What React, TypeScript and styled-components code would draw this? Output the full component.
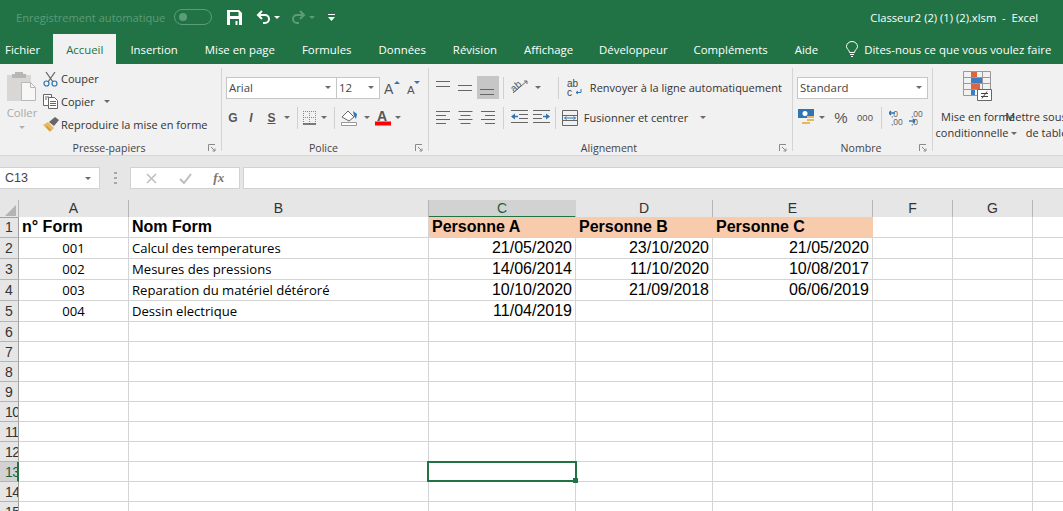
import React from "react";
import styled, { createGlobalStyle } from "styled-components";

const GREEN = "#217346";
const UI = `"Open Sans", "Noto Sans", sans-serif`;
const ARIAL = `"Liberation Sans", Arial, sans-serif`;

const Global = createGlobalStyle`
  html, body { margin: 0; padding: 0; background: #e6e6e6; }
  * { box-sizing: border-box; }
`;

const Page = styled.div`
  width: 1063px; height: 511px; overflow: hidden; background: #e6e6e6;
  font-family: ${UI}; display: flex; flex-direction: column;
`;

/* ---------- title bar ---------- */
const TitleBar = styled.div`
  height: 34px; background: ${GREEN}; display: flex; align-items: center; flex: none;
  padding-left: 16px; color: #fff; font-size: 11.2px;
`;
const AutoSave = styled.span`color: #5c9c78; font-size: 11.1px; width: 158px; white-space: nowrap;`;
const Toggle = styled.span`
  width: 38px; height: 16px; border: 1px solid #5c9c78; border-radius: 8px; display: flex; align-items: center;
  padding-left: 4px; margin-right: 15px;
  &::before { content: ""; width: 8px; height: 8px; border-radius: 50%; background: #5c9c78; }
`;
const QuickIcon = styled.span<{ $w: number }>`width: ${p => p.$w}px; height: 20px; display: flex; align-items: center; flex: none;`;
const Title = styled.span`margin-left: auto; margin-right: 25px; font-size: 11.2px; white-space: pre;`;

/* ---------- tabs ---------- */
const TabBar = styled.div`height: 30px; background: ${GREEN}; display: flex; flex: none; padding-left: 5px;`;
const Tab = styled.div<{ $active?: boolean; $gap: number }>`
  height: 30px; display: flex; align-items: center; white-space: nowrap; font-size: 11.4px;
  color: ${p => (p.$active ? GREEN : "#fff")};
  background: ${p => (p.$active ? "#f1f1f1" : "transparent")};
  padding: ${p => (p.$active ? "0 13px" : "0")};
  margin-right: ${p => p.$gap}px;
`;
const Tell = styled(Tab)`gap: 5px;`;

/* ---------- ribbon ---------- */
const Ribbon = styled.div`
  height: 92px; background: #f1f1f1; border-bottom: 1px solid #d6d6d6; display: flex; flex: none; overflow: hidden;
  font-size: 11px; color: #333; width: 1063px;
`;
const Group = styled.div<{ $w: number }>`
  width: ${p => p.$w}px; flex: none; position: relative; display: flex; flex-direction: column;
  &::after { content: ""; position: absolute; right: 0; top: 4px; bottom: 4px; width: 1px; background: #d4d4d4; }
`;
const GroupBody = styled.div`height: 76px; display: flex; flex: none;`;
const GroupLabel = styled.div`text-align: center; font-size: 10.6px; line-height: 16px; color: #444; height: 16px; padding-right: 4px;`;
const Launcher = styled.span`position: absolute; right: 6px; bottom: 3px; width: 8px; height: 8px; display: flex;`;

const Paste = styled.div`
  width: 36px; margin-left: 4px; display: flex; flex-direction: column; align-items: center; padding-top: 7px; color: #a9a9a9;
  font-size: 11.3px; line-height: 16px; flex: none;
`;
const Clip = styled.div`display: flex; flex-direction: column; margin-left: 2px; padding-top: 3px; font-size: 11px;`;
const ClipRow = styled.div`height: 23px; display: flex; align-items: center; gap: 2px; white-space: nowrap;`;
const ClipIcon = styled.span`width: 17px; height: 18px; display: flex; align-items: center; justify-content: center;`;
const Stack = styled.div`display: flex; flex-direction: column; padding-top: 12px; padding-left: 4px; gap: 7px;`;
const Line = styled.div<{ $gap?: number }>`display: flex; align-items: center; gap: ${p => p.$gap ?? 0}px; height: 23px;`;
const Combo = styled.div<{ $w: number }>`
  width: ${p => p.$w}px; height: 22px; background: #fff; border: 1px solid #c6c6c6; display: flex; align-items: center;
  padding: 0 2px; justify-content: space-between; font-size: 11.4px; color: #444; flex: none; font-family: ${UI};
`;
const Caret = styled.span<{ $dim?: boolean }>`
  width: 0; height: 0; border-left: 3px solid transparent; border-right: 3px solid transparent;
  border-top: 3px solid ${p => (p.$dim ? "#b0b0b0" : "#6a6a6a")}; display: inline-block; margin: 0 3px; flex: none;
`;
const Btn = styled.span<{ $w: number; $on?: boolean }>`
  width: ${p => p.$w}px; height: 23px; display: flex; align-items: center; justify-content: center; flex: none;
  background: ${p => (p.$on ? "#c6c6c6" : "transparent")};
`;
const Bold = styled.span<{ $f?: string; $i?: boolean; $u?: boolean; $s?: number }>`
  font-family: ${ARIAL}; font-size: ${p => p.$s ?? 12}px; font-weight: 700; color: #555;
  font-style: ${p => (p.$i ? "italic" : "normal")};
  text-decoration: ${p => (p.$u ? "underline" : "none")};
`;
const Sep = styled.span`width: 1px; height: 22px; background: #d0d0d0; margin: 0 4px; flex: none;`;
const WideBtn = styled.div`display: flex; align-items: center; gap: 3px; white-space: nowrap; height: 23px;`;
const StyleBtn = styled.div<{ $w: number }>`
  width: ${p => p.$w}px; flex: none; display: flex; flex-direction: column; align-items: center; padding-top: 7px;
  font-size: 11px; line-height: 16px; white-space: nowrap; text-align: center; color: #333;
`;
const IconSlot = styled.div`height: 35px; display: flex; align-items: flex-start; justify-content: center; margin-bottom: 3px;`;

/* ---------- formula bar ---------- */
const FormulaBar = styled.div`height: 44px; flex: none; display: flex; padding-top: 11px; background: #e6e6e6;`;
const NameBox = styled.div`
  width: 100px; height: 22px; background: #fff; border: 1px solid #d2d2d2; border-left: none;
  font-family: ${ARIAL}; font-size: 12.5px; color: #444; display: flex; align-items: center; justify-content: space-between; padding: 0 5px;
`;
const Grip = styled.span`width: 30px; height: 22px; display: flex; align-items: center; justify-content: center;`;
const FxBox = styled.div`
  width: 110px; height: 22px; background: #fff; border: 1px solid #d2d2d2; display: flex; align-items: center; justify-content: space-around; padding: 0 4px;
  margin-right: 3px; flex: none;
`;
const FxText = styled.span`font-family: "Liberation Serif", serif; font-style: italic; font-size: 13px; font-weight: 700; color: #777;`;
const Formula = styled.div`flex: 1; height: 22px; background: #fff; border: 1px solid #d2d2d2; border-right: none;`;

/* ---------- sheet ---------- */
const COLS = "19px 110px 300px 147px 137px 160px 80px 80px 31px";
const Sheet = styled.div`flex: 1; background: #fff; min-height: 0;`;
const SRow = styled.div<{ $h: number }>`display: grid; grid-template-columns: ${COLS}; height: ${p => p.$h}px;`;
const Corner = styled.div`
  background: #e6e6e6; border-right: 1px solid #b5b5b5; border-bottom: 1px solid #9f9f9f; position: relative;
  &::after { content: ""; position: absolute; right: 2px; bottom: 1px; width: 0; height: 0;
    border-left: 11px solid transparent; border-bottom: 11px solid #b4b4b4; }
`;
const ColHead = styled.div<{ $sel?: boolean }>`
  background: ${p => (p.$sel ? "#d2d2d2" : "#e6e6e6")};
  border-right: 1px solid ${p => (p.$sel ? "#d2d2d2" : "#b5b5b5")};
  border-bottom: ${p => (p.$sel ? `2px solid ${GREEN}` : "1px solid #9f9f9f")};
  color: ${p => (p.$sel ? "#17613b" : "#333")};
  font-family: ${ARIAL}; font-size: 14px; line-height: 16px; text-align: center;
`;
const RowHead = styled.div<{ $sel?: boolean }>`
  background: ${p => (p.$sel ? "#d2d2d2" : "#e6e6e6")};
  border-right: ${p => (p.$sel ? `2px solid ${GREEN}` : "1px solid #9f9f9f")};
  border-bottom: 1px solid #b5b5b5;
  color: ${p => (p.$sel ? "#17613b" : "#333")};
  font-family: ${ARIAL}; font-size: 14px; display: flex; align-items: center; padding-left: ${p => 5}px; overflow: hidden;
  letter-spacing: -0.6px;
`;
const Cell = styled.div<{ $kind?: string; $fill?: boolean }>`
  position: relative; border-right: 1px solid #d4d4d4; border-bottom: 1px solid #d4d4d4; white-space: nowrap;
  display: flex; align-items: center; padding: 0 3px 0 3px;
  background: ${p => (p.$fill ? "#f8cbad" : "#fff")};
  ${p => p.$fill && "border-right-color: #f8cbad;"}
  color: #000;
  font-family: ${p => (p.$kind === "text" || p.$kind === "code" ? UI : ARIAL)};
  font-size: ${p => (p.$kind === "text" || p.$kind === "code" ? "13.1px" : "16px")};
  font-weight: ${p => (p.$kind === "head" ? 700 : 400)};
  justify-content: ${p => (p.$kind === "date" ? "flex-end" : p.$kind === "code" ? "center" : "flex-start")};
  overflow: visible;
`;
const Selection = styled.div`
  position: absolute; left: -2px; top: -1px; right: -2px; bottom: -1px; border: 2px solid ${GREEN}; z-index: 2;
  &::after { content: ""; position: absolute; right: -3px; bottom: -3px; width: 5px; height: 5px; background: ${GREEN}; border: 0; }
`;

/* ---------- icons ---------- */
const Launch = () => (
  <Launcher>
    <svg width="8" height="8" viewBox="0 0 8 8" fill="none" stroke="#8a8a8a"><path d="M.5 7V.5H7" /><path d="M3 3l4 4M7 4.5V7H4.5" /></svg>
  </Launcher>
);
const SaveIcon = () => (
  <svg width="15" height="15" viewBox="0 0 15 15"><path fill="#fff" d="M0 0h12l3 3v12H0z" /><path fill={GREEN} d="M3 2h8.5v4H3zM3 9h9v6H3z" /><path fill="#fff" d="M8.5 11h2v4h-2z" /></svg>
);
const UndoIcon = ({ c }: { c: string }) => (
  <svg width="15" height="14" viewBox="0 0 15 14" fill="none" stroke={c} strokeWidth="2"><path d="M6 1L2 5l4 4" /><path d="M2 5h7a4 4 0 0 1 0 8H7" /></svg>
);
const RedoIcon = ({ c }: { c: string }) => (
  <svg width="15" height="14" viewBox="0 0 15 14" fill="none" stroke={c} strokeWidth="2"><path d="M9 1l4 4-4 4" /><path d="M13 5H6a4 4 0 0 0 0 8h2" /></svg>
);
const Bulb = () => (
  <svg width="14" height="16" viewBox="0 0 14 16" fill="none" stroke="#fff"><path d="M4.5 11.5C4.5 9 1.5 8 1.5 5.5a5.5 5 0 0 1 11 0C12.5 8 9.5 9 9.5 11.5z" /><path d="M5 13.5h4M6 15.5h2" /></svg>
);
const PasteIcon = () => (
  <svg width="30" height="31" viewBox="0 0 30 31"><path fill="#d9d6d6" d="M0 4h24v26H0z" /><path fill="#b9b6b6" d="M8 1h8v2h3v4H5V3h3z" /><path fill="#f7f7f7" stroke="#b8b8b8" d="M14.500 11.500h9l5 5v13h-14z" /><path fill="none" stroke="#b8b8b8" d="M23.500 11.500v5h5" /></svg>
);
const Scissors = () => (
  <svg width="15" height="16" viewBox="0 0 15 16" fill="none"><path stroke="#666" strokeWidth="1.3" d="M3 1l7 10M12 1L5 11" /><circle cx="3.500" cy="12.500" r="2.500" stroke="#2f75b5" strokeWidth="1.200" /><circle cx="11.500" cy="12.500" r="2.500" stroke="#2f75b5" strokeWidth="1.200" /></svg>
);
const CopyIcon = () => (
  <svg width="16" height="15" viewBox="0 0 16 15" fill="none"><path stroke="#666" fill="#fff" d="M.5.500h8v11h-8z" /><path stroke="#666" fill="#fff" d="M5.500 3.500h6l3 3v8h-9z" /><path stroke="#2f75b5" d="M7 7.500h6M7 9.500h6M7 11.500h6" /><path stroke="#666" d="M2 3h4M2 5h2" /></svg>
);
const Brush = () => (
  <svg width="16" height="15" viewBox="0 0 16 15"><path fill="#e8b75f" d="M0 8l5-3 6 6-4 4z" /><path fill="#c9964a" d="M3 10l1-1 4 4-1 1z" /><path fill="#666" d="M6 5l6-5 4 3-5 6z" /></svg>
);
const LinesIcon = ({ top, widths, align, h = 5 }: { top: number; widths: number[]; align?: string; h?: number }) => (
  <svg width="16" height="16" viewBox="0 0 16 16" stroke="#666" fill="none">
    {widths.map((w, i) => {
      const y = top + i * h + 0.5;
      const x = align === "center" ? (15 - w) / 2 : align === "right" ? 15 - w : 0;
      return <path key={i} d={`M${x} ${y}h${w}`} />;
    })}
  </svg>
);
const Grow = () => (
  <svg width="17" height="15" viewBox="0 0 17 15"><text x="0" y="14" fontFamily="Liberation Sans" fontSize="14" fill="#555">A</text><path fill="#2f75b5" d="M10 4l3-3 3 3z" /></svg>
);
const Shrink = () => (
  <svg width="15" height="15" viewBox="0 0 15 15"><text x="1" y="14" fontFamily="Liberation Sans" fontSize="11.500" fill="#555">A</text><path fill="#2f75b5" d="M8 1h6l-3 3z" /></svg>
);
const BorderIcon = () => (
  <svg width="14" height="14" viewBox="0 0 14 14" fill="none"><path stroke="#888" strokeDasharray="1 1" d="M.5 0v13M6.500 0v13M12.500 0v13M0 .5h13M0 6.500h13" /><path stroke="#555" strokeWidth="1.500" d="M0 13h13" /></svg>
);
const FillIcon = () => (
  <svg width="18" height="18" viewBox="0 0 18 18" fill="none"><path stroke="#666" fill="#fff" d="M1 8l6-6 6 6-5 4z" /><path fill="#2f75b5" d="M12 2l4 3-1 5-2-3z" /><path stroke="#999" d="M.5 13.500h15v3H.5z" fill="#fff" /></svg>
);
const FontColor = () => (
  <svg width="16" height="17" viewBox="0 0 16 17"><text x="2" y="12" fontFamily="Liberation Sans" fontWeight="700" fontSize="14" fill="#555">A</text><path fill="#f00" d="M0 12.500h16v4H0z" /></svg>
);
const OrientIcon = () => (
  <svg width="20" height="17" viewBox="0 0 20 17" fill="none"><text x="1" y="10" transform="rotate(-40 7 8)" fontFamily="Liberation Sans" fontSize="10" fill="#555">ab</text><path stroke="#666" d="M3 14L17 2M17 2h-3M17 2v3" /></svg>
);
const IndentIcon = ({ flip }: { flip?: boolean }) => (
  <svg width="17" height="15" viewBox="0 0 17 15" fill="none" style={{ transform: flip ? "scaleX(-1)" : "none" }}>
    <path stroke="#666" d="M0 .5h17M8 4.500h9M8 8.500h9M0 12.500h17" />
    <path stroke="#2f75b5" strokeWidth="1.500" d="M1 6.500h6" /><path fill="#2f75b5" d="M0 6.500l4-3v6z" />
  </svg>
);
const WrapIcon = () => (
  <svg width="17" height="18" viewBox="0 0 17 18"><text x="0" y="8" fontFamily="Liberation Sans" fontSize="10" fill="#444">ab</text><text x="0" y="17" fontFamily="Liberation Sans" fontSize="10" fill="#444">c</text><path fill="none" stroke="#2f75b5" d="M14 10v3.500H9M9 13.500l2-1.500M9 13.500l2 1.500" /></svg>
);
const MergeIcon = () => (
  <svg width="16" height="16" viewBox="0 0 16 16" fill="none"><path stroke="#666" d="M.5.500h15v15H.5zM.5 5.500h15M.5 10.500h15" /><path stroke="#2f75b5" d="M2.500 8h11M2.500 8l2-1.500M2.500 8l2 1.500M13.500 8l-2-1.500M13.500 8l-2 1.500" /></svg>
);
const MoneyIcon = () => (
  <svg width="17" height="17" viewBox="0 0 17 17"><path fill="#2f75b5" d="M0 0h16v9H0z" /><circle cx="7" cy="4.500" r="2.500" fill="#fff" /><path fill="#e8b75f" d="M9 7h7v2H9zM9 10h7v2H9zM4 13h8v2H4z" /></svg>
);
const Dec = ({ flip }: { flip?: boolean }) => (
  <svg width="17" height="17" viewBox="0 0 17 17" fill="none"><text x="2" y="8" fontFamily="Liberation Sans" fontSize="8.500" fill="#666">{flip ? ",00" : ",0"}</text><text x="2" y="16" fontFamily="Liberation Sans" fontSize="8.500" fill="#666">{flip ? ",0" : ",00"}</text><path stroke="#2f75b5" strokeWidth="1.500" d={flip ? "M0 12h6M6 12l-2-2M6 12l-2 2" : "M0 4h6M0 4l2-2M0 4l2 2"} /></svg>
);
const CondIcon = () => (
  <svg width="30" height="30" viewBox="0 0 30 30" fill="none">
    <path stroke="#999" d="M.5.500h27v24H.5zM.5 6.500h27M.5 12.500h27M.5 18.500h27M8.500 0v25M19.500 0v25" />
    <path fill="#d9663d" d="M8 1h6v5H8zM8 13h9v5H8z" /><path fill="#3f7cc0" d="M8 7h11v5H8zM8 19h4v5H8z" />
    <path fill="#fff" stroke="#666" d="M14.500 18.500h14v11h-14z" />
    <path stroke="#444" d="M18 22.500h7M18 25.500h7M24 20.500l-5 7" />
  </svg>
);
const XIcon = () => (
  <svg width="11" height="11" viewBox="0 0 11 11" fill="none" stroke="#bdbdbd" strokeWidth="1.500"><path d="M1 1l9 9M10 1l-9 9" /></svg>
);
const CheckIcon = () => (
  <svg width="13" height="11" viewBox="0 0 13 11" fill="none" stroke="#bdbdbd" strokeWidth="2"><path d="M1 6l4 4 7-9" /></svg>
);
const Dots = () => (
  <svg width="3" height="12" viewBox="0 0 3 12" fill="#a8a8a8"><path d="M0 0h3v2H0zM0 5h3v2H0zM0 10h3v2H0z" /></svg>
);

/* ---------- data ---------- */
const COL_NAMES = ["A", "B", "C", "D", "E", "F", "G", ""];
const DATA: { code?: string; name?: string; c?: string; d?: string; e?: string }[] = [
  { code: "001", name: "Calcul des temperatures", c: "21/05/2020", d: "23/10/2020", e: "21/05/2020" },
  { code: "002", name: "Mesures des pressions", c: "14/06/2014", d: "11/10/2020", e: "10/08/2017" },
  { code: "003", name: "Reparation du matériel détéroré", c: "10/10/2020", d: "21/09/2018", e: "06/06/2019" },
  { code: "004", name: "Dessin electrique", c: "11/04/2019" },
];
const TABS: [string, number][] = [
  ["Fichier", 13], ["Accueil", 14], ["Insertion", 27], ["Mise en page", 27], ["Formules", 27], ["Données", 27],
  ["Révision", 27], ["Affichage", 26], ["Développeur", 26], ["Compléments", 27], ["Aide", 27],
];

export default function App() {
  return (
    <Page>
      <Global />
      <TitleBar>
        <AutoSave>Enregistrement automatique</AutoSave>
        <Toggle />
        <QuickIcon $w={29}><SaveIcon /></QuickIcon>
        <QuickIcon $w={35}><UndoIcon c="#fff" /><Caret style={{ borderTopColor: "#fff" }} /></QuickIcon>
        <QuickIcon $w={37}><RedoIcon c="#5c9c78" /><Caret style={{ borderTopColor: "#5c9c78" }} /></QuickIcon>
        <QuickIcon $w={10}>
          <svg width="7" height="7" viewBox="0 0 7 7" fill="#fff"><path d="M0 0h7v1H0zM0 3h7L3.500 7z" /></svg>
        </QuickIcon>
        <Title>Classeur2 (2) (1) (2).xlsm  -  Excel</Title>
      </TitleBar>
      <TabBar>
        {TABS.map(([t, g], i) => <Tab key={t} $gap={g} $active={i === 1}>{t}</Tab>)}
        <Tell $gap={0}><Bulb />Dites-nous ce que vous voulez faire</Tell>
      </TabBar>
      <Ribbon>
        <Group $w={222}>
          <GroupBody>
            <Paste>
              <PasteIcon />
              <span style={{ marginTop: 3 }}>Coller</span>
              <Caret $dim style={{ marginTop: 5 }} />
            </Paste>
            <Clip>
              <ClipRow><ClipIcon><Scissors /></ClipIcon>Couper</ClipRow>
              <ClipRow><ClipIcon><CopyIcon /></ClipIcon>Copier<Caret style={{ marginLeft: 7 }} /></ClipRow>
              <ClipRow><ClipIcon><Brush /></ClipIcon>Reproduire la mise en forme</ClipRow>
            </Clip>
          </GroupBody>
          <GroupLabel>Presse-papiers</GroupLabel>
          <Launch />
        </Group>
        <Group $w={207}>
          <GroupBody>
            <Stack>
              <Line>
                <Combo $w={111}><span>Arial</span><Caret /></Combo>
                <Combo $w={43} style={{ borderLeft: "none" }}><span>12</span><Caret /></Combo>
                <Btn $w={24}><Grow /></Btn>
                <Btn $w={19}><Shrink /></Btn>
              </Line>
              <Line>
                <Btn $w={14}><Bold>G</Bold></Btn>
                <Btn $w={22}><Bold $i>I</Bold></Btn>
                <Btn $w={19}><Bold $u>S</Bold></Btn>
                <Caret /><Sep />
                <Btn $w={16}><BorderIcon /></Btn>
                <Caret /><Sep />
                <Btn $w={22}><FillIcon /></Btn>
                <Caret />
                <Btn $w={19}><FontColor /></Btn>
                <Caret />
              </Line>
            </Stack>
          </GroupBody>
          <GroupLabel>Police</GroupLabel>
          <Launch />
        </Group>
        <Group $w={364}>
          <GroupBody>
            <Stack style={{ paddingTop: 12, gap: 7 }}>
              <Line>
                <Btn $w={22}><LinesIcon top={1} widths={[14, 14]} /></Btn>
                <Btn $w={22}><LinesIcon top={5} widths={[14, 14]} /></Btn>
                <Btn $w={22} $on><LinesIcon top={9} widths={[14, 14]} /></Btn>
                <Sep style={{ margin: "0 4px 0 4px" }} />
                <Btn $w={24}><OrientIcon /></Btn>
                <Caret /><Sep style={{ margin: "0 8px 0 14px" }} />
                <WideBtn><WrapIcon />&nbsp;Renvoyer à la ligne automatiquement</WideBtn>
              </Line>
              <Line>
                <Btn $w={22}><LinesIcon top={1} widths={[14, 10, 14, 10]} h={4} /></Btn>
                <Btn $w={22}><LinesIcon top={1} widths={[14, 10, 14, 10]} h={4} align="center" /></Btn>
                <Btn $w={22}><LinesIcon top={1} widths={[14, 10, 14, 10]} h={4} align="right" /></Btn>
                <Sep style={{ margin: "0 4px 0 4px" }} />
                <Btn $w={22}><IndentIcon /></Btn>
                <Btn $w={22}><IndentIcon flip /></Btn>
                <Sep style={{ margin: "0 6px 0 3px" }} />
                <WideBtn><MergeIcon />&nbsp;Fusionner et centrer<Caret style={{ marginLeft: 9 }} /></WideBtn>
              </Line>
            </Stack>
          </GroupBody>
          <GroupLabel>Alignement</GroupLabel>
          <Launch />
        </Group>
        <Group $w={140}>
          <GroupBody>
            <Stack>
              <Line>
                <Combo $w={131}><span>Standard</span><Caret /></Combo>
              </Line>
              <Line>
                <Btn $w={19}><MoneyIcon /></Btn>
                <Caret />
                <Btn $w={26}><span style={{ fontFamily: ARIAL, fontSize: 15, color: "#555" }}>%</span></Btn>
                <Btn $w={22}><span style={{ fontFamily: ARIAL, fontSize: 9.5, color: "#555" }}>000</span></Btn>
                <Sep style={{ margin: "0 5px" }} />
                <Btn $w={20}><Dec /></Btn>
                <Btn $w={20}><Dec flip /></Btn>
              </Line>
            </Stack>
          </GroupBody>
          <GroupLabel>Nombre</GroupLabel>
          <Launch />
        </Group>
        <StyleBtn $w={90}>
          <IconSlot><CondIcon /></IconSlot>
          <span>Mise en forme</span>
          <span>conditionnelle<Caret style={{ marginBottom: 2 }} /></span>
        </StyleBtn>
        <StyleBtn $w={60}>
          <IconSlot />
          <span>Mettre sous forme</span>
          <span>de tableau</span>
        </StyleBtn>
      </Ribbon>
      <FormulaBar>
        <NameBox>C13<Caret /></NameBox>
        <Grip><Dots /></Grip>
        <FxBox><XIcon /><CheckIcon /><FxText>fx</FxText></FxBox>
        <Formula />
      </FormulaBar>
      <Sheet>
        <SRow $h={17}>
          <Corner />
          {COL_NAMES.map((c, i) => <ColHead key={i} $sel={c === "C"}>{c}</ColHead>)}
        </SRow>
        <SRow $h={21}>
          <RowHead>1</RowHead>
          <Cell $kind="head">n° Form</Cell>
          <Cell $kind="head">Nom Form</Cell>
          <Cell $kind="head" $fill>Personne A</Cell>
          <Cell $kind="head" $fill>Personne B</Cell>
          <Cell $kind="head" $fill>Personne C</Cell>
          <Cell /><Cell /><Cell />
        </SRow>
        {DATA.map((r, i) => (
          <SRow $h={21} key={i}>
            <RowHead>{i + 2}</RowHead>
            <Cell $kind="code">{r.code}</Cell>
            <Cell $kind="text">{r.name}</Cell>
            <Cell $kind="date">{r.c}</Cell>
            <Cell $kind="date">{r.d}</Cell>
            <Cell $kind="date">{r.e}</Cell>
            <Cell /><Cell /><Cell />
          </SRow>
        ))}
        {Array.from({ length: 10 }, (_, i) => i + 6).map(n => (
          <SRow $h={20} key={n}>
            <RowHead $sel={n === 13}>{n}</RowHead>
            <Cell /><Cell />
            <Cell>{n === 13 && <Selection />}</Cell>
            <Cell /><Cell /><Cell /><Cell /><Cell />
          </SRow>
        ))}
      </Sheet>
    </Page>
  );
}
